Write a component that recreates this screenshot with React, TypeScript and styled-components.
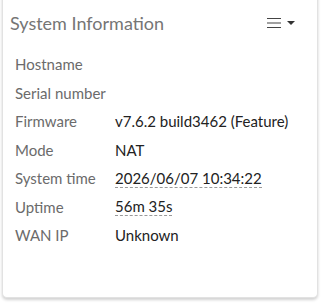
import React from "react";
import styled, { createGlobalStyle } from "styled-components";

const GlobalStyle = createGlobalStyle`
  body {
    margin: 0;
    background: #ffffff;
    font-family: Lato, "Open Sans", sans-serif;
  }
`;

const rows = [
  { label: "Hostname", value: "" },
  { label: "Serial number", value: "" },
  { label: "Firmware", value: "v7.6.2 build3462 (Feature)" },
  { label: "Mode", value: "NAT" },
  { label: "System time", value: "2026/06/07 10:34:22", dotted: true },
  { label: "Uptime", value: "56m 35s", dotted: true },
  { label: "WAN IP", value: "Unknown" },
];

const App = () => {
  return (
    <>
      <GlobalStyle />
      <Page>
        <Card>
          <Header>
            <Title>System Information</Title>
            <MenuButton aria-label="menu">
              <svg width="14" height="12" viewBox="0 0 14 12">
                <path d="M0 1.5h14M0 6h14M0 10.5h14" stroke="#444" strokeWidth="1.2" />
              </svg>
              <svg width="8" height="6" viewBox="0 0 8 6">
                <path d="M0 1h8L4 5z" fill="#333" />
              </svg>
            </MenuButton>
          </Header>
          <InfoTable>
            {rows.map((r) => (
              <Row key={r.label}>
                <Label>{r.label}</Label>
                <Value $dotted={r.dotted}>{r.value}</Value>
              </Row>
            ))}
          </InfoTable>
        </Card>
      </Page>
    </>
  );
};

const Page = styled.div`
  width: 322px;
  height: 304px;
  padding: 0 4px 0 2px;
  box-sizing: border-box;
  overflow: hidden;
`;

const Card = styled.div`
  margin-top: -6px;
  height: 304px;
  background: #fff;
  border: 1px solid #e2e2e2;
  border-top: none;
  border-radius: 0 0 5px 5px;
  box-shadow: 0 2px 3px rgba(0, 0, 0, 0.18);
  box-sizing: border-box;
`;

const Header = styled.div`
  display: flex;
  align-items: center;
  justify-content: space-between;
  height: 48px;
  padding: 10px 22px 0 7px;
  box-sizing: border-box;
`;

const Title = styled.h2`
  margin: 0;
  font-size: 18px;
  font-weight: 400;
  color: #757575;
`;

const MenuButton = styled.button`
  display: flex;
  align-items: center;
  gap: 6px;
  border: 0;
  padding: 0;
  background: transparent;
  cursor: pointer;
`;

const InfoTable = styled.div`
  display: flex;
  flex-direction: column;
  padding: 8px 0 0 12px;
`;

const Row = styled.div`
  display: grid;
  grid-template-columns: 100px 1fr;
  align-items: center;
  height: 28.5px;
  font-size: 15px;
`;

const Label = styled.span`
  color: #6b6b6b;
`;

const Value = styled.span<{ $dotted?: boolean }>`
  color: #222;
  justify-self: start;
  border-bottom: ${(p) => (p.$dotted ? "1px dashed #999" : "none")};
  line-height: 18px;
`;

export default App;
